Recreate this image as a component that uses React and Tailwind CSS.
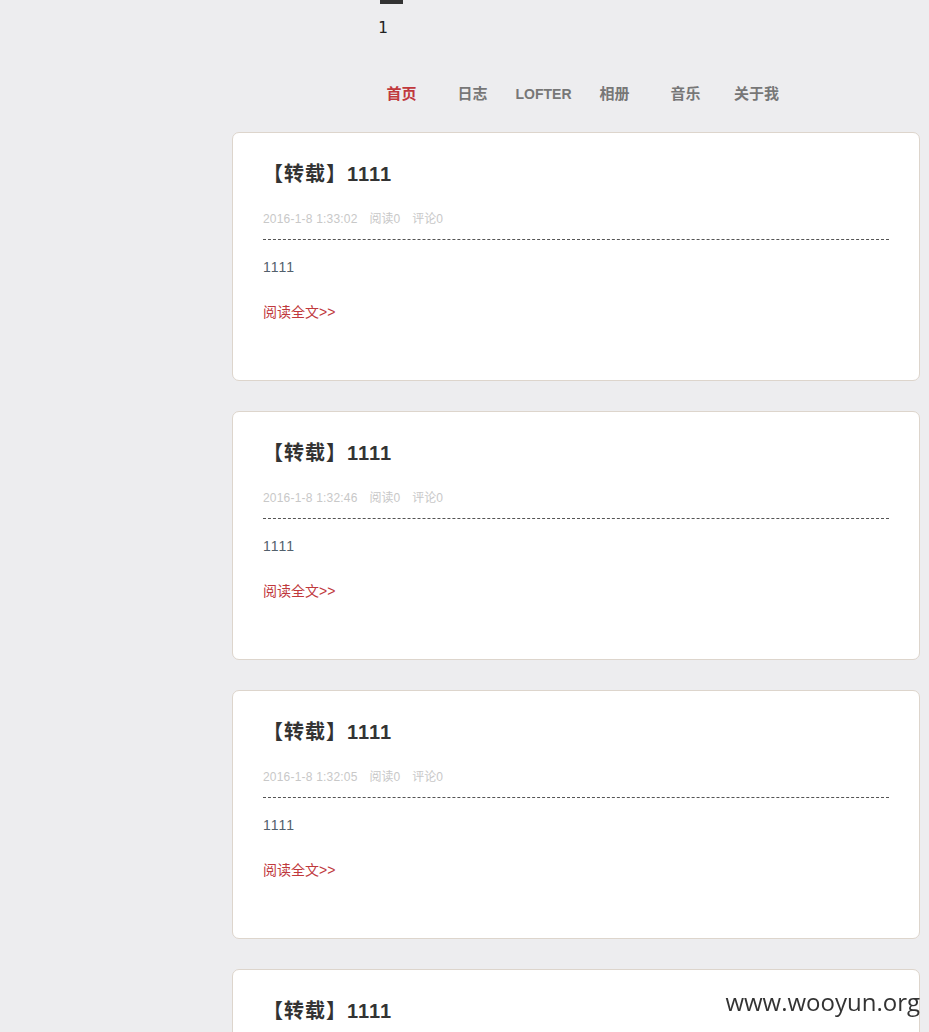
const NAV = [
  { label: '首页', active: true },
  { label: '日志' },
  { label: 'LOFTER', latin: true },
  { label: '相册' },
  { label: '音乐' },
  { label: '关于我' },
]

const POSTS = [
  { time: '2016-1-8 1:33:02' },
  { time: '2016-1-8 1:32:46' },
  { time: '2016-1-8 1:32:05' },
  { time: '2016-1-8 1:31:40' },
]

const sans = { fontFamily: '"Liberation Sans", Arial, "Noto Sans CJK SC", sans-serif' }

function Post({ time }) {
  return (
    <div className="mb-[30px] rounded-[7px] border border-[#ddd5cc] bg-white pb-[58px] pl-[30px] pr-[30px] pt-[27px]">
      <h2 className="text-[20px] font-bold leading-[28px] tracking-[1px] text-[#333]">【转载】1111</h2>
      <div className="mt-[22px] flex gap-[12px] border-b border-dashed border-[#555] pb-[11px] text-[12px] leading-[18px] text-[#c8c8c8]">
        <span className="tracking-[0.2px]">{time}</span>
        <span>阅读0</span>
        <span>评论0</span>
      </div>
      <p className="mt-[17px] text-[14px] leading-[20px] tracking-[1px] text-[#52606c]">1111</p>
      <a className="mt-[25px] block text-[14px] leading-[20px] text-[#c0393d]">阅读全文&gt;&gt;</a>
    </div>
  )
}

export default function App() {
  return (
    <div className="relative min-h-screen overflow-hidden bg-[#ededef]" style={sans}>
      <div className="ml-[380px] h-[4px] w-[23px] bg-[#333]" />
      <div
        className="ml-[378px] mt-[15px] text-[16px] leading-[18px] text-[#222]"
        style={{ fontFamily: '"DejaVu Sans Mono", "Liberation Mono", monospace' }}
      >
        1
      </div>
      <nav className="ml-[366px] mt-[47px] flex">
        {NAV.map((item) => (
          <a
            key={item.label}
            className={`block w-[71px] text-center font-bold leading-[20px] ${
              item.latin ? 'text-[14px]' : 'text-[15px]'
            } ${item.active ? 'text-[#c0393d]' : 'text-[#777]'}`}
          >
            {item.label}
          </a>
        ))}
      </nav>
      <main className="ml-[232px] mr-[9px] mt-[28px]">
        {POSTS.map((p) => (
          <Post key={p.time} time={p.time} />
        ))}
      </main>
      <div
        className="fixed right-[9px] top-[986px] text-[24px] leading-[32px] text-[#333]"
        style={{ fontFamily: '"Open Sans", "DejaVu Sans", sans-serif' }}
      >
        www.wooyun.org
      </div>
    </div>
  )
}
